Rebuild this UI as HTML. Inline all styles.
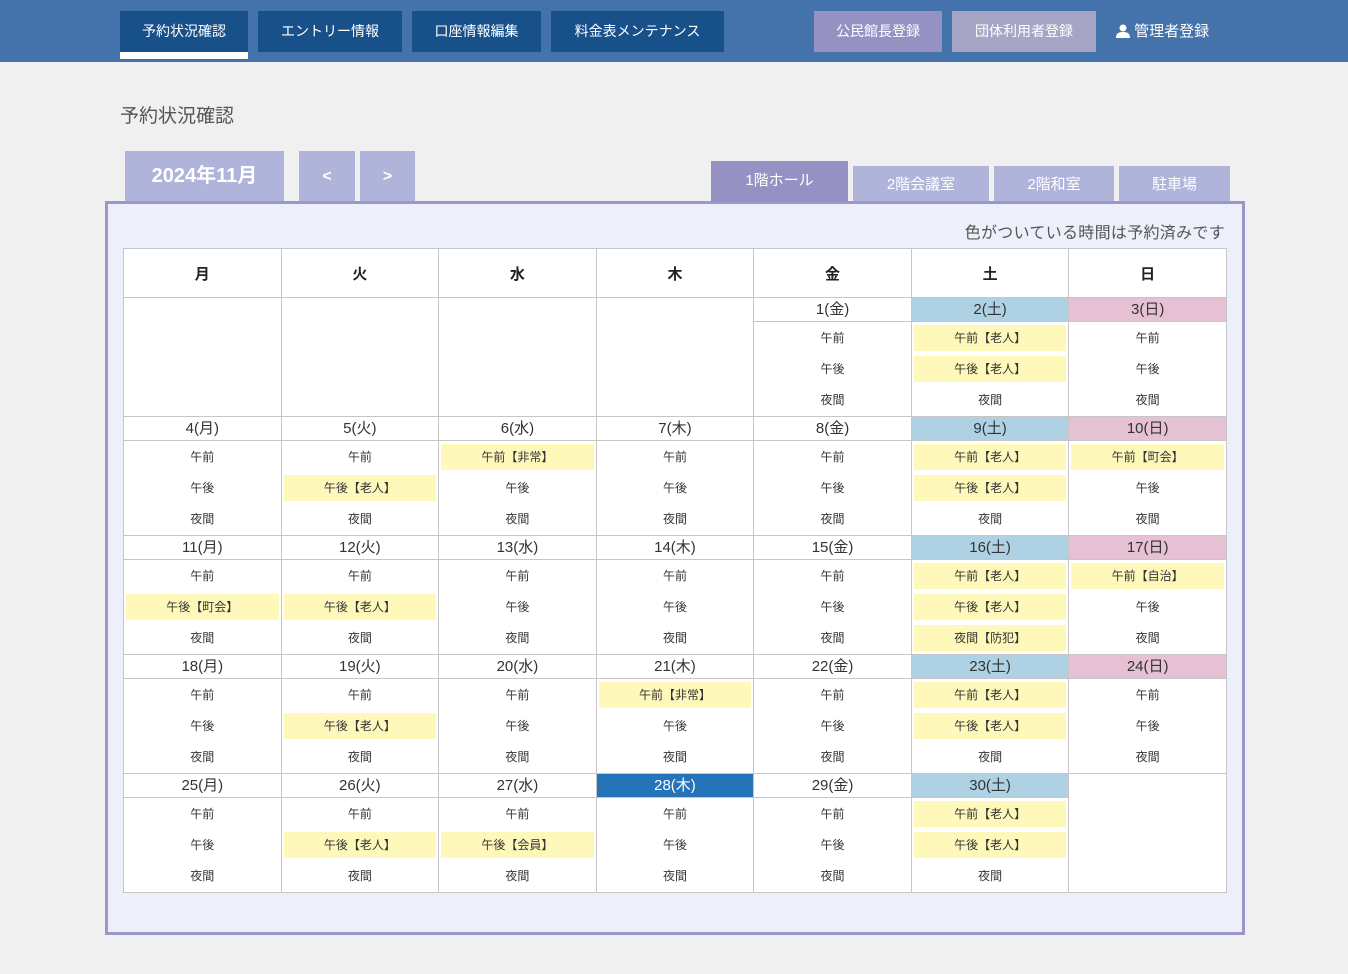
<!DOCTYPE html>
<html><head><meta charset="utf-8"><style>
*{box-sizing:border-box;margin:0;padding:0}
body{width:1348px;height:974px;background:#f0f0f0;font-family:"Liberation Sans","Noto Sans CJK JP",sans-serif;position:relative;overflow:hidden;color:#333}
.nav{position:absolute;left:0;top:0;width:1348px;height:62px;background:#4472aa}
.nb{position:absolute;top:11px;height:41px;background:#18508a;color:#fff;font-size:14px;line-height:41px;text-align:center}
.title{position:absolute;left:120px;top:101px;font-size:19px;color:#555}
.mb{position:absolute;background:#b0b3da;color:#fff;font-weight:bold;text-align:center}
.tab{position:absolute;background:#b0b3da;color:#fff;font-size:15px;text-align:center}
.panel{position:absolute;left:105px;top:201px;width:1140px;height:734px;background:#edf0fb;border:3px solid #9b97c9}
.note{position:absolute;right:17px;top:20px;font-size:16px;color:#555;letter-spacing:0.3px;line-height:20px}
table{position:absolute;left:15px;top:44px;border-collapse:collapse;background:#fff;table-layout:fixed;width:1104px}
td,th{border:1px solid #c6c6c6;text-align:center;padding:0;vertical-align:top}
th{height:49px;font-size:15px;vertical-align:middle;color:#222}
td.d{height:24px;font-size:15px;line-height:23px;color:#333}
td.s{height:95px;padding:3px 2px 0}
.sl{height:26px;line-height:26px;font-size:12px;margin-bottom:5px;color:#333}
.sl:last-child{margin-bottom:0}
.y{background:#fff8bb}
.sat{background:#aed2e3}.sun{background:#e5c1d3}.today{background:#2574b9;color:#fff!important}
</style></head><body>
<div class="nav">
<div class="nb" style="left:120px;width:128px">予約状況確認</div>
<div style="position:absolute;left:120px;top:52px;width:128px;height:7px;background:#fff"></div>
<div class="nb" style="left:258px;width:144px">エントリー情報</div>
<div class="nb" style="left:412px;width:129px">口座情報編集</div>
<div class="nb" style="left:551px;width:173px">料金表メンテナンス</div>
<div class="nb" style="left:814px;width:128px;background:#9592c3">公民館長登録</div>
<div class="nb" style="left:952px;width:144px;background:#a6a5c6">団体利用者登録</div>
<div class="nb" style="left:1116px;width:100px;background:none;text-align:left;font-size:15px"><svg width="14" height="14" viewBox="0 0 14 14" style="vertical-align:-2px"><circle cx="7" cy="4" r="3.5" fill="#fff"/><path d="M0 14C0 9 3 8 7 8S14 9 14 14Z" fill="#fff"/></svg> 管理者登録</div>
</div>
<div class="title">予約状況確認</div>
<div class="mb" style="left:125px;top:151px;width:159px;height:50px;line-height:50px;font-size:20px">2024年11月</div>
<div class="mb" style="left:299px;top:151px;width:56px;height:50px;line-height:52px;font-size:16px">&lt;</div>
<div class="mb" style="left:360px;top:151px;width:55px;height:50px;line-height:52px;font-size:16px">&gt;</div>
<div class="tab" style="left:711px;top:161px;width:137px;height:42px;line-height:40px;background:#9592c3">1階ホール</div>
<div class="tab" style="left:853px;top:166px;width:136px;height:37px;line-height:38px">2階会議室</div>
<div class="tab" style="left:994px;top:166px;width:120px;height:37px;line-height:38px">2階和室</div>
<div class="tab" style="left:1119px;top:166px;width:111px;height:37px;line-height:38px">駐車場</div>
<div class="panel">
<div class="note">色がついている時間は予約済みです</div>
<table>
<tr><th>月</th><th>火</th><th>水</th><th>木</th><th>金</th><th>土</th><th>日</th></tr>
<tr><td rowspan="2"></td><td rowspan="2"></td><td rowspan="2"></td><td rowspan="2"></td><td class="d">1(金)</td><td class="d sat">2(土)</td><td class="d sun">3(日)</td></tr>
<tr><td class="s"><div class="sl">午前</div><div class="sl">午後</div><div class="sl">夜間</div></td>
<td class="s"><div class="sl y">午前【老人】</div><div class="sl y">午後【老人】</div><div class="sl">夜間</div></td>
<td class="s"><div class="sl">午前</div><div class="sl">午後</div><div class="sl">夜間</div></td></tr>
<tr><td class="d">4(月)</td><td class="d">5(火)</td><td class="d">6(水)</td><td class="d">7(木)</td><td class="d">8(金)</td><td class="d sat">9(土)</td><td class="d sun">10(日)</td></tr>
<tr><td class="s"><div class="sl">午前</div><div class="sl">午後</div><div class="sl">夜間</div></td>
<td class="s"><div class="sl">午前</div><div class="sl y">午後【老人】</div><div class="sl">夜間</div></td>
<td class="s"><div class="sl y">午前【非常】</div><div class="sl">午後</div><div class="sl">夜間</div></td>
<td class="s"><div class="sl">午前</div><div class="sl">午後</div><div class="sl">夜間</div></td>
<td class="s"><div class="sl">午前</div><div class="sl">午後</div><div class="sl">夜間</div></td>
<td class="s"><div class="sl y">午前【老人】</div><div class="sl y">午後【老人】</div><div class="sl">夜間</div></td>
<td class="s"><div class="sl y">午前【町会】</div><div class="sl">午後</div><div class="sl">夜間</div></td></tr>
<tr><td class="d">11(月)</td><td class="d">12(火)</td><td class="d">13(水)</td><td class="d">14(木)</td><td class="d">15(金)</td><td class="d sat">16(土)</td><td class="d sun">17(日)</td></tr>
<tr><td class="s"><div class="sl">午前</div><div class="sl y">午後【町会】</div><div class="sl">夜間</div></td>
<td class="s"><div class="sl">午前</div><div class="sl y">午後【老人】</div><div class="sl">夜間</div></td>
<td class="s"><div class="sl">午前</div><div class="sl">午後</div><div class="sl">夜間</div></td>
<td class="s"><div class="sl">午前</div><div class="sl">午後</div><div class="sl">夜間</div></td>
<td class="s"><div class="sl">午前</div><div class="sl">午後</div><div class="sl">夜間</div></td>
<td class="s"><div class="sl y">午前【老人】</div><div class="sl y">午後【老人】</div><div class="sl y">夜間【防犯】</div></td>
<td class="s"><div class="sl y">午前【自治】</div><div class="sl">午後</div><div class="sl">夜間</div></td></tr>
<tr><td class="d">18(月)</td><td class="d">19(火)</td><td class="d">20(水)</td><td class="d">21(木)</td><td class="d">22(金)</td><td class="d sat">23(土)</td><td class="d sun">24(日)</td></tr>
<tr><td class="s"><div class="sl">午前</div><div class="sl">午後</div><div class="sl">夜間</div></td>
<td class="s"><div class="sl">午前</div><div class="sl y">午後【老人】</div><div class="sl">夜間</div></td>
<td class="s"><div class="sl">午前</div><div class="sl">午後</div><div class="sl">夜間</div></td>
<td class="s"><div class="sl y">午前【非常】</div><div class="sl">午後</div><div class="sl">夜間</div></td>
<td class="s"><div class="sl">午前</div><div class="sl">午後</div><div class="sl">夜間</div></td>
<td class="s"><div class="sl y">午前【老人】</div><div class="sl y">午後【老人】</div><div class="sl">夜間</div></td>
<td class="s"><div class="sl">午前</div><div class="sl">午後</div><div class="sl">夜間</div></td></tr>
<tr><td class="d">25(月)</td><td class="d">26(火)</td><td class="d">27(水)</td><td class="d today">28(木)</td><td class="d">29(金)</td><td class="d sat">30(土)</td><td rowspan="2"></td></tr>
<tr><td class="s"><div class="sl">午前</div><div class="sl">午後</div><div class="sl">夜間</div></td>
<td class="s"><div class="sl">午前</div><div class="sl y">午後【老人】</div><div class="sl">夜間</div></td>
<td class="s"><div class="sl">午前</div><div class="sl y">午後【会員】</div><div class="sl">夜間</div></td>
<td class="s"><div class="sl">午前</div><div class="sl">午後</div><div class="sl">夜間</div></td>
<td class="s"><div class="sl">午前</div><div class="sl">午後</div><div class="sl">夜間</div></td>
<td class="s"><div class="sl y">午前【老人】</div><div class="sl y">午後【老人】</div><div class="sl">夜間</div></td></tr>
</table>
</div>
</body></html>
